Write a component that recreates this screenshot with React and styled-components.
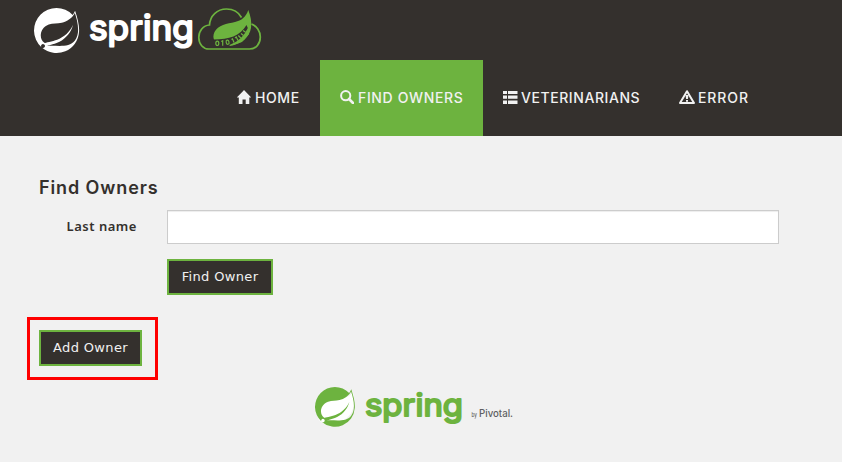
import React from 'react';
import styled, { createGlobalStyle } from 'styled-components';

const GlobalStyle = createGlobalStyle`
  * { box-sizing: border-box; }
  body { margin: 0; background: #f1f1f1; color: #34302d; font-family: 'Noto Sans', sans-serif; font-size: 14px; }
`;

const Page = styled.div`
  width: 842px;
  height: 462px;
  overflow: hidden;
  background: #f1f1f1;
`;

const Header = styled.header`
  height: 136px;
  background: #34302d;
`;

const Brand = styled.div`
  height: 60px;
  padding-left: 30px;
  svg { display: block; }
`;

const Nav = styled.nav`
  display: flex;
  height: 76px;
  padding-left: 217px;
`;

const NavItem = styled.a`
  display: flex;
  align-items: center;
  width: ${(p) => p.$width}px;
  padding-left: ${(p) => p.$inset || 20}px;
  gap: ${(p) => p.$gap || 4}px;
  background: ${(p) => (p.$active ? '#6db33f' : 'transparent')};
  color: #f1f1f1;
  font: 500 14px/20px Inter, sans-serif;
  letter-spacing: ${(p) => p.$tracking || 0}px;
  white-space: nowrap;
  svg { flex: none; fill: currentColor; margin-top: -2px; }
`;

const Content = styled.main`
  padding: 40px 63px 0 39px;
`;

const Title = styled.h2`
  margin: 0;
  height: 34px;
  font: 600 18px/23px Inter, sans-serif;
  letter-spacing: 0.9px;
`;

const Field = styled.div`
  display: grid;
  grid-template-columns: 98px 612px;
  column-gap: 30px;
  row-gap: 15px;
`;

const Label = styled.label`
  text-align: right;
  font: 600 13px/33px 'Noto Sans', sans-serif;
  letter-spacing: 0.52px;
`;

const Input = styled.input`
  height: 34px;
  width: 100%;
  border: 1px solid #ccc;
  border-radius: 0;
  background: #fff;
  box-shadow: inset 0 1px 1px rgba(0, 0, 0, 0.075);
  padding: 6px 12px;
`;

const Button = styled.button`
  width: ${(p) => p.$width}px;
  height: 36px;
  padding: 0;
  border: 2px solid #6db33f;
  background: #34302d;
  color: #f1f1f1;
  font: 400 13px/20px 'DejaVu Sans', sans-serif;
  letter-spacing: 0.35px;
  white-space: nowrap;
`;

const FindButton = styled(Button)`
  grid-column: 2;
`;

const Highlight = styled.div`
  width: 131px;
  height: 63px;
  margin: 22px 0 0 -12px;
  padding: 10px 0 0 9px;
  border: 3px solid #ff0000;
`;

const Footer = styled.footer`
  padding: 3px 0 0 312px;
  svg { display: block; }
`;

const LEAF =
  'M21.8537 1.4158a10.4504 10.4504 0 0 1-1.284 2.2471A11.9666 11.9666 0 1 0 3.8518 20.7757l.4445.3951a11.9543 11.9543 0 0 0 19.6316-8.2971c.3457-3.0126-.568-6.8649-2.0742-11.458zM5.5805 20.8745a1.0174 1.0174 0 1 1-.1482-1.4323 1.0396 1.0396 0 0 1 .1482 1.4323zm16.1991-3.5806c-2.9385 3.9263-9.2601 2.5928-13.2852 2.7904 0 0-.7161.0494-1.4323.1481 0 0 .2717-.1234.6174-.2469 2.8398-.9877 4.1732-1.1853 5.9018-2.0742 3.2349-1.6545 6.4698-5.2844 7.1118-9.0379-1.2347 3.6053-4.9881 6.7167-8.3959 7.9761-2.3459.8643-6.5685 1.7039-6.5685 1.7039l-.1729-.0988c-2.8645-1.4076-2.9632-7.6304 2.2718-9.6306 2.2966-.889 4.4696-.395 6.9637-.9877 2.6422-.6174 5.7043-2.5929 6.939-5.1857 1.3828 4.1732 3.062 10.643.0493 14.6434z';

const Wordmark = styled.text`
  font: 400 ${(p) => p.$size}px Inter, sans-serif;
  stroke-width: 2;
  stroke-linejoin: round;
`;

const HeaderLogo = () => (
  <svg width="240" height="60" viewBox="30 0 240 60">
    <path d={LEAF} fill="#fff" transform="translate(34 8) scale(1.88)" />
    <Wordmark $size={34} x="89" y="40" textLength="105" lengthAdjust="spacingAndGlyphs" fill="#fff" stroke="#fff">spring</Wordmark>
    <path
      d="M251.500 24C256.500 26 260.300 31 260.300 37C260.300 44 256 49 249.500 49H209C203 49 198.800 44 198.800 37.500C198.800 31 203 25.500 209.500 25C210 16 217 9 226.500 9C233 9 238.500 12 241.500 17.500"
      fill="none" stroke="#6db33f" strokeWidth="1.7"
    />
    <path d="M248.300 10C246 17 241.500 20.500 235 22C227 23.800 218 25 214.500 32C213 35 213.200 38 214.200 40H225L230 46C242 44 249.500 37 251 28C252 22 250.500 16 248.300 10Z" fill="#6db33f" />
    <path d="M214 39.500C229 39.500 240 36 246.500 25L247.800 28C244 37 236 43.500 225 46.500H213.500Z" fill="#34302d" />
    <path d="M230 46C236 43.500 243 38.500 247 30L249 34L242 42Z" fill="#6db33f" />
    <g fill="none" stroke="#6db33f" strokeWidth="1.2">
      <ellipse cx="217.300" cy="43.300" rx="1.500" ry="2.200" />
      <path d="M221.200 41.500L222.700 40.800V45.800" />
      <ellipse cx="227.600" cy="42.200" rx="1.400" ry="2.100" transform="rotate(-14 227.600 42.200)" />
      <path d="M231.500 39.500L232.500 38.800L234 42.500M235 38L236.200 37L238 40.500M238.300 35.500L240.800 38M241 33.500L243.500 35.500M243 30.500L245.600 32.300" />
    </g>
  </svg>
);

const Grey = styled.text`
  font: 500 ${(p) => p.$size}px Inter, sans-serif;
  fill: #5e5f62;
`;

const FooterLogo = () => (
  <svg width="210" height="50" viewBox="312 383 210 50">
    <path d="M353 392C348 402 325 397 319 410C316 418 319 422 325 424C345 425 358 414 353 392Z" fill="#fff" />
    <path d={LEAF} fill="#6db33f" transform="translate(315 387) scale(1.66)" />
    <Wordmark $size={31} x="365" y="416" textLength="98" lengthAdjust="spacingAndGlyphs" fill="#6db33f" stroke="#6db33f">spring</Wordmark>
    <Grey $size={6.5} x="471.500" y="417" textLength="5.5" lengthAdjust="spacingAndGlyphs">by</Grey>
    <Grey $size={9.8} x="479" y="417" textLength="34" lengthAdjust="spacingAndGlyphs">Pivotal.</Grey>
  </svg>
);

const HomeIcon = () => (
  <svg width="14" height="14" viewBox="0 0 14 14"><path d="M7 0L14.300 7.500H12.300V14H8.700V9.500H5.500V14H1.800V7.500H-.2L5.700 1.400Z" /></svg>
);
const SearchIcon = () => (
  <svg width="14" height="14" viewBox="0 0 14 14">
    <circle cx="5.700" cy="5.700" r="4.600" fill="none" stroke="currentColor" strokeWidth="2" />
    <path d="M9 9L13 13" stroke="currentColor" strokeWidth="2.600" strokeLinecap="round" />
  </svg>
);
const ListIcon = () => (
  <svg width="15" height="14" viewBox="0 0 15 14"><path d="M0 1H4V4H0ZM5 1H14.500V4H5ZM0 5.500H4V8.800H0ZM5 5.500H14.500V8.800H5ZM0 10.500H4V14H0ZM5 10.500H14.500V14H5Z" /></svg>
);
const WarningIcon = () => (
  <svg width="16" height="14" viewBox="0 0 16 14">
    <path d="M8 1.200L15 13H1Z" fill="none" stroke="currentColor" strokeWidth="2" strokeLinejoin="round" />
    <path d="M6.500 5H9.500L8.900 9H7.100ZM7 10H9V11.700H7Z" />
  </svg>
);

export default function App() {
  return (
    <Page>
      <GlobalStyle />
      <Header>
        <Brand><HeaderLogo /></Brand>
        <Nav>
          <NavItem $width={103} $tracking={0.6}><HomeIcon /><span>HOME</span></NavItem>
          <NavItem $width={163} $active $tracking={0.65}><SearchIcon /><span>FIND OWNERS</span></NavItem>
          <NavItem $width={177} $gap={3} $tracking={0.57}><ListIcon /><span>VETERINARIANS</span></NavItem>
          <NavItem $width={109} $inset={19} $gap={3} $tracking={0.9}><WarningIcon /><span>ERROR</span></NavItem>
        </Nav>
      </Header>
      <Content>
        <Title>Find Owners</Title>
        <Field>
          <Label htmlFor="lastName">Last name</Label>
          <Input id="lastName" />
          <FindButton $width={106}>Find Owner</FindButton>
        </Field>
        <Highlight><Button $width={103}>Add Owner</Button></Highlight>
      </Content>
      <Footer><FooterLogo /></Footer>
    </Page>
  );
}
